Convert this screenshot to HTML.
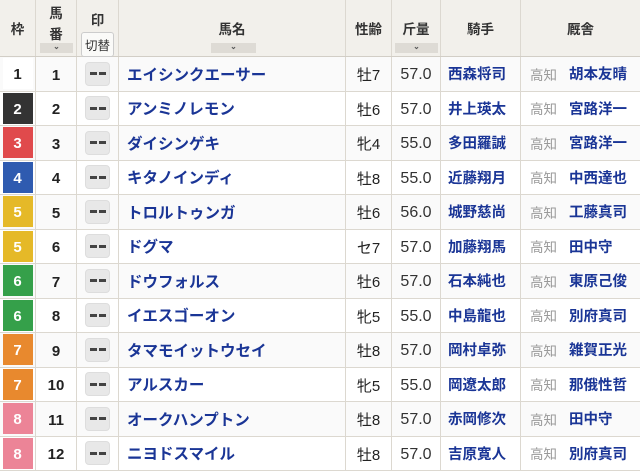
<!DOCTYPE html>
<html><head><meta charset="utf-8"><style>
*{margin:0;padding:0;box-sizing:border-box}
body{width:640px;height:471px;overflow:hidden;background:#fff;font-family:"Liberation Sans","Noto Sans CJK JP",sans-serif;color:#222}
.r{display:flex;height:34.5px;border-bottom:1px solid #dcd8d0}
.r:nth-child(odd){background:#fafafa}
.h{display:flex;height:57px;background:#f2f0eb;border-bottom:1px solid #d2cec6}
.c{border-right:1px solid #dcd8d0;display:flex;align-items:center;justify-content:center;position:relative;font-size:15px}
.w1{width:36px}.w2{width:41px}.w3{width:42px}.w4{width:227px;justify-content:flex-start;padding-left:8px}
.w5{width:46px}.w6{width:49px}.w7{width:80px;justify-content:flex-start;padding-left:7px}.w8{width:119px;border-right:none;justify-content:flex-start;padding-left:9px}
.h .c{font-weight:bold;font-size:13.5px;color:#333;justify-content:center;padding-left:0;flex-direction:column}
.so{position:absolute;bottom:3px;height:10px;background:#dedbd5;font-size:8px;color:#555;line-height:8px;text-align:center}
.fr{width:30px;height:31px;display:flex;align-items:center;justify-content:center;font-weight:bold;font-size:15px;color:#fff;padding-top:2px}
.num{font-weight:bold;font-size:15px;padding-top:3px}
.r .w5{padding-top:2px}
.mk{width:25px;height:24px;background:#e8e8e8;border-radius:4px;border:1px solid #ddd;display:flex;align-items:center;justify-content:center;gap:2px}
.mk i{display:block;width:7px;height:3px;background:#444}
.nm{color:#1a3596;font-weight:bold;font-size:15.5px}
.jk{color:#1a3596;font-weight:bold;font-size:14.5px}
.pl{color:#999;font-size:13.5px;margin-right:12px}
.tr{color:#1a3596;font-weight:bold;font-size:14.5px}
.wt{font-size:16px;color:#333;padding-top:3px}
</style></head><body>
<div class="h">
<div class="c w1">枠</div>
<div class="c w2" style="justify-content:flex-start;padding-top:3px;line-height:21px">馬<br>番<div class="so" style="left:4px;width:33px">⌄</div></div>
<div class="c w3" style="justify-content:flex-start;padding-top:9px">印<div style="margin-top:3px;border:1px solid #ccc;border-radius:3px;background:#fafaf8;font-weight:normal;font-size:12.5px;padding:2px 3px">切替</div></div>
<div class="c w4">馬名<div class="so" style="left:92px;width:45px">⌄</div></div>
<div class="c w5">性齢</div>
<div class="c w6">斤量<div class="so" style="left:3px;width:43px">⌄</div></div>
<div class="c w7" style="padding-left:0">騎手</div>
<div class="c w8" style="padding-left:0">厩舎</div>
</div>
<div id="b">
<div class="r"><div class="c w1"><div class="fr" style="color:#222;background:#fff">1</div></div><div class="c w2 num">1</div><div class="c w3"><div class="mk"><i></i><i></i></div></div><div class="c w4 nm">エイシンクエーサー</div><div class="c w5">牡7</div><div class="c w6 wt">57.0</div><div class="c w7 jk">西森将司</div><div class="c w8"><span class="pl">高知</span><span class="tr">胡本友晴</span></div></div>
<div class="r"><div class="c w1"><div class="fr" style="background:#333">2</div></div><div class="c w2 num">2</div><div class="c w3"><div class="mk"><i></i><i></i></div></div><div class="c w4 nm">アンミノレモン</div><div class="c w5">牡6</div><div class="c w6 wt">57.0</div><div class="c w7 jk">井上瑛太</div><div class="c w8"><span class="pl">高知</span><span class="tr">宮路洋一</span></div></div>
<div class="r"><div class="c w1"><div class="fr" style="background:#e04a4c">3</div></div><div class="c w2 num">3</div><div class="c w3"><div class="mk"><i></i><i></i></div></div><div class="c w4 nm">ダイシンゲキ</div><div class="c w5">牝4</div><div class="c w6 wt">55.0</div><div class="c w7 jk">多田羅誠</div><div class="c w8"><span class="pl">高知</span><span class="tr">宮路洋一</span></div></div>
<div class="r"><div class="c w1"><div class="fr" style="background:#2f5bb0">4</div></div><div class="c w2 num">4</div><div class="c w3"><div class="mk"><i></i><i></i></div></div><div class="c w4 nm">キタノインディ</div><div class="c w5">牡8</div><div class="c w6 wt">55.0</div><div class="c w7 jk">近藤翔月</div><div class="c w8"><span class="pl">高知</span><span class="tr">中西達也</span></div></div>
<div class="r"><div class="c w1"><div class="fr" style="background:#e5b928">5</div></div><div class="c w2 num">5</div><div class="c w3"><div class="mk"><i></i><i></i></div></div><div class="c w4 nm">トロルトゥンガ</div><div class="c w5">牡6</div><div class="c w6 wt">56.0</div><div class="c w7 jk">城野慈尚</div><div class="c w8"><span class="pl">高知</span><span class="tr">工藤真司</span></div></div>
<div class="r"><div class="c w1"><div class="fr" style="background:#e5b928">5</div></div><div class="c w2 num">6</div><div class="c w3"><div class="mk"><i></i><i></i></div></div><div class="c w4 nm">ドグマ</div><div class="c w5">セ7</div><div class="c w6 wt">57.0</div><div class="c w7 jk">加藤翔馬</div><div class="c w8"><span class="pl">高知</span><span class="tr">田中守</span></div></div>
<div class="r"><div class="c w1"><div class="fr" style="background:#35a04a">6</div></div><div class="c w2 num">7</div><div class="c w3"><div class="mk"><i></i><i></i></div></div><div class="c w4 nm">ドウフォルス</div><div class="c w5">牡6</div><div class="c w6 wt">57.0</div><div class="c w7 jk">石本純也</div><div class="c w8"><span class="pl">高知</span><span class="tr">東原己俊</span></div></div>
<div class="r"><div class="c w1"><div class="fr" style="background:#35a04a">6</div></div><div class="c w2 num">8</div><div class="c w3"><div class="mk"><i></i><i></i></div></div><div class="c w4 nm">イエスゴーオン</div><div class="c w5">牝5</div><div class="c w6 wt">55.0</div><div class="c w7 jk">中島龍也</div><div class="c w8"><span class="pl">高知</span><span class="tr">別府真司</span></div></div>
<div class="r"><div class="c w1"><div class="fr" style="background:#e8892e">7</div></div><div class="c w2 num">9</div><div class="c w3"><div class="mk"><i></i><i></i></div></div><div class="c w4 nm">タマモイットウセイ</div><div class="c w5">牡8</div><div class="c w6 wt">57.0</div><div class="c w7 jk">岡村卓弥</div><div class="c w8"><span class="pl">高知</span><span class="tr">雑賀正光</span></div></div>
<div class="r"><div class="c w1"><div class="fr" style="background:#e8892e">7</div></div><div class="c w2 num">10</div><div class="c w3"><div class="mk"><i></i><i></i></div></div><div class="c w4 nm">アルスカー</div><div class="c w5">牝5</div><div class="c w6 wt">55.0</div><div class="c w7 jk">岡遼太郎</div><div class="c w8"><span class="pl">高知</span><span class="tr">那俄性哲</span></div></div>
<div class="r"><div class="c w1"><div class="fr" style="background:#ec8497">8</div></div><div class="c w2 num">11</div><div class="c w3"><div class="mk"><i></i><i></i></div></div><div class="c w4 nm">オークハンプトン</div><div class="c w5">牡8</div><div class="c w6 wt">57.0</div><div class="c w7 jk">赤岡修次</div><div class="c w8"><span class="pl">高知</span><span class="tr">田中守</span></div></div>
<div class="r"><div class="c w1"><div class="fr" style="background:#ec8497">8</div></div><div class="c w2 num">12</div><div class="c w3"><div class="mk"><i></i><i></i></div></div><div class="c w4 nm">ニヨドスマイル</div><div class="c w5">牡8</div><div class="c w6 wt">57.0</div><div class="c w7 jk">吉原寛人</div><div class="c w8"><span class="pl">高知</span><span class="tr">別府真司</span></div></div>
</div>
</body></html>
